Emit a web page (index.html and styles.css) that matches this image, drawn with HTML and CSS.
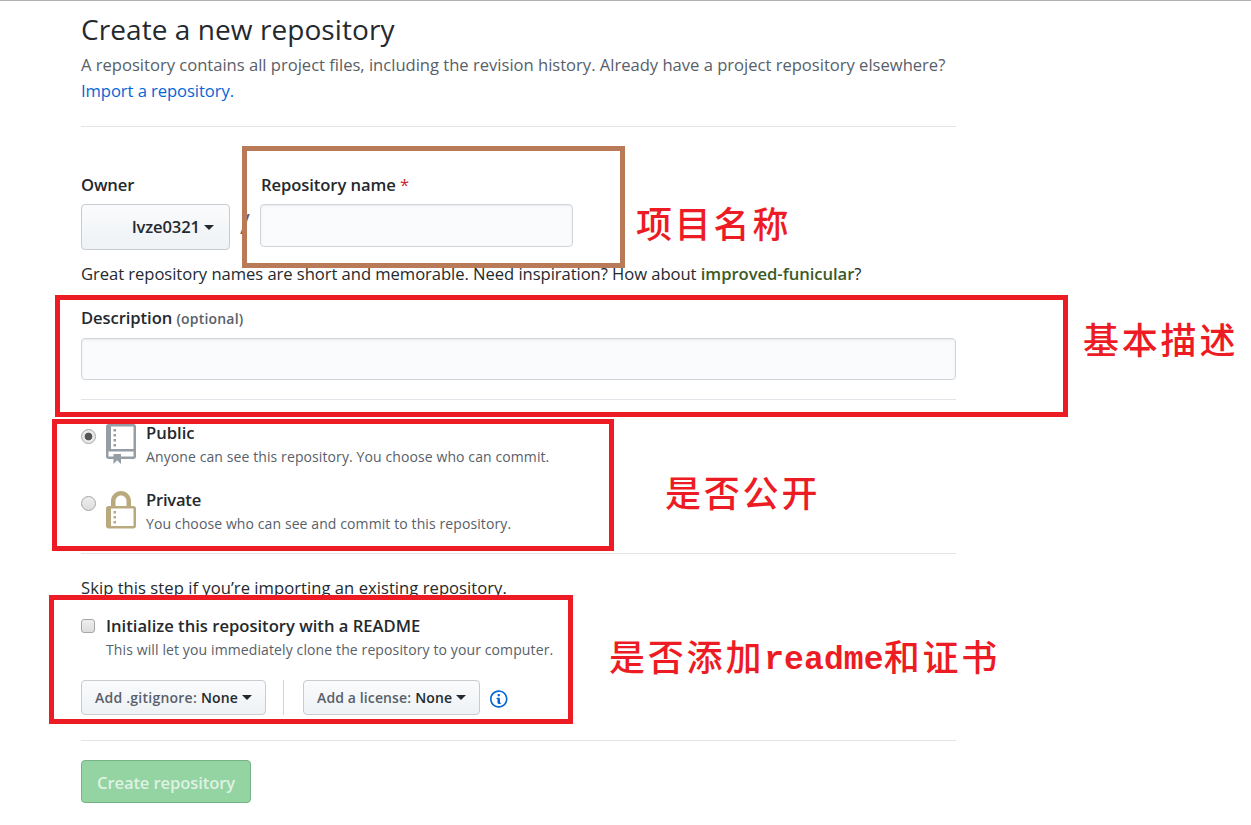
FILE: index.html
```html
<!DOCTYPE html>
<html lang="en">
<head>
<meta charset="utf-8">
<title>Create a new repository</title>
<link rel="stylesheet" href="styles.css">
</head>
<body>
<main class="page">
  <header class="intro">
    <h1 class="title">Create a new repository</h1>
    <p class="lead">A repository contains all project files, including the revision history. Already have a project repository elsewhere?<br><a class="link">Import a repository.</a></p>
  </header>
  <section class="naming">
    <div class="name-row">
      <div class="field owner">
        <label class="label">Owner</label>
        <button class="btn owner-btn"><span>lvze0321</span><i class="caret"></i></button>
      </div>
      <span class="slash">/</span>
      <div class="field">
        <label class="label name-label">Repository name <span class="required">*</span></label>
        <input class="input name-input" type="text">
      </div>
    </div>
    <p class="hint">Great repository names are short and memorable. Need inspiration? How about <strong class="suggestion">improved-funicular</strong>?</p>
    <div class="field description">
      <label class="label">Description <span class="optional">(optional)</span></label>
      <input class="input" type="text">
    </div>
  </section>
  <section class="visibility">
    <label class="choice">
      <span class="radio checked"></span>
      <svg class="icon public" viewBox="0 0 12 16"><path d="M4 9H3V8h1v1zm0-3H3v1h1V6zm0-2H3v1h1V4zm0-2H3v1h1V2zm8-1v12c0 .55-.45 1-1 1H6v2l-1.5-1.5L3 16v-2H1c-.55 0-1-.45-1-1V1c0-.55.45-1 1-1h10c.55 0 1 .45 1 1zm-1 10H1v2h2v-1h3v1h5v-2zm0-10H2v9h9V1z"/></svg>
      <span class="choice-text"><b class="choice-title">Public</b><span class="note">Anyone can see this repository. You choose who can commit.</span></span>
    </label>
    <label class="choice">
      <span class="radio"></span>
      <svg class="icon private" viewBox="0 0 12 16"><path d="M4 13H3v-1h1v1zm8-6v7c0 .55-.45 1-1 1H1c-.55 0-1-.45-1-1V7c0-.55.45-1 1-1h1V4c0-2.2 1.8-4 4-4s4 1.8 4 4v2h1c.55 0 1 .45 1 1zM3.8 6h4.41V4c0-1.22-.98-2.2-2.2-2.2-1.22 0-2.2.98-2.2 2.2v2H3.8zM11 7H2v7h9V7zM4 8H3v1h1V8zm0 2H3v1h1v-1z"/></svg>
      <span class="choice-text"><b class="choice-title tight">Private</b><span class="note">You choose who can see and commit to this repository.</span></span>
    </label>
  </section>
  <section class="setup">
    <p class="skip">Skip this step if you’re importing an existing repository.</p>
    <label class="choice readme">
      <span class="checkbox"></span>
      <span class="choice-text"><b class="choice-title">Initialize this repository with a README</b><span class="note">This will let you immediately clone the repository to your computer.</span></span>
    </label>
    <div class="templates">
      <button class="btn small gitignore"><span>Add .gitignore:</span><b>None</b><i class="caret"></i></button>
      <span class="divider"></span>
      <button class="btn small license"><span>Add a license:</span><b>None</b><i class="caret"></i></button>
      <svg class="info" viewBox="0 0 14 16"><path fill-rule="evenodd" d="M6.3 5.69a.942.942 0 0 1-.28-.7c0-.28.09-.52.28-.7.19-.18.42-.28.7-.28.28 0 .52.09.7.28.18.19.28.42.28.7 0 .28-.09.52-.28.7a1 1 0 0 1-.7.3c-.28 0-.52-.11-.7-.3zM8 7.99c-.02-.25-.11-.48-.31-.69-.2-.19-.42-.3-.69-.31H6c-.27.02-.48.13-.69.31-.2.2-.3.44-.31.69h1v3c.02.27.11.5.31.69.2.2.42.31.69.31h1c.27 0 .48-.11.69-.31.2-.19.3-.42.31-.69H8V7.98v.01zM7 2.3c-3.14 0-5.7 2.54-5.7 5.68 0 3.14 2.56 5.7 5.7 5.7s5.7-2.55 5.7-5.7c0-3.15-2.56-5.69-5.7-5.69v.01zM7 .98c3.86 0 7 3.14 7 7s-3.14 7-7 7-7-3.12-7-7 3.14-7 7-7z"/></svg>
    </div>
  </section>
  <button class="submit">Create repository</button>
</main>
<div class="frame frame-name"></div>
<div class="frame frame-description"></div>
<div class="frame frame-visibility"></div>
<div class="frame frame-readme"></div>
<span class="callout callout-name">项目名称</span>
<span class="callout callout-description">基本描述</span>
<span class="callout callout-visibility">是否公开</span>
<span class="callout callout-readme">是否添加<span class="latin">readme</span>和证书</span>
</body>
</html>
```
FILE: styles.css
```css
* { box-sizing: border-box; }
body {
  position: relative;
  width: 1251px;
  height: 825px;
  margin: 0;
  overflow: hidden;
  border-top: 1px solid #b0b0b0;
  background: #fff;
  color: #24292e;
  font: 16.6px/26px "Open Sans", "Noto Sans", sans-serif;
}
h1, p { margin: 0; font-weight: 400; }
b, strong { font-weight: 600; }
button, input { font: inherit; color: inherit; outline: 0; }
.page { width: 875px; margin-left: 81px; padding-top: 10px; }
.intro { height: 116px; border-bottom: 1px solid #e1e4e8; }
.title { height: 41px; font-size: 28px; letter-spacing: .07px; line-height: 37px; }
.lead { color: #586069; letter-spacing: -.015px; }
.link { color: #0366d6; letter-spacing: -.07px; }
.naming { height: 273px; padding-top: 45px; border-bottom: 1px solid #e1e4e8; }
.name-row { display: flex; height: 89px; }
.field { display: flex; flex-direction: column; }
.owner { width: 149px; }
.label { height: 32px; font-weight: 600; letter-spacing: -.08px; }
.owner .label, .owner-btn { letter-spacing: -.13px; }
.name-row .name-label { padding-left: 1px; }
.required { color: #cb2431; font-weight: 400; }
.optional { color: #586069; font-size: 14px; letter-spacing: .2px; }
.slash { width: 30px; padding: 39px 0 0 10px; color: #586069; font-size: 27px; }
.input {
  width: 100%;
  height: 42px;
  padding: 0 10px;
  border: 1px solid #d1d5da;
  border-radius: 4px;
  background: #fafbfc;
  box-shadow: inset 0 1px 2px rgba(27, 31, 35, .075);
}
.name-input { width: 313px; height: 43px; }
.btn {
  display: flex;
  align-items: center;
  border: 1px solid #c8cbcf;
  border-radius: 4px;
  background: linear-gradient(#fafbfc, #eff3f6 90%);
  font-weight: 600;
}
.owner-btn { height: 46px; padding: 0 0 0 50px; }
.caret {
  margin-left: 4px;
  border: 5px solid transparent;
  border-top-color: #24292e;
  border-bottom: 0;
}
.hint { height: 44px; letter-spacing: -.05px; }
.suggestion { color: #3c5a24; letter-spacing: -.03px; }
.description .label { height: 33px; }
.visibility { height: 154px; padding-top: 20px; border-bottom: 1px solid #e1e4e8; }
.choice { display: flex; height: 67px; }
.radio {
  width: 15px;
  height: 15px;
  margin: 9px 10px 0 0;
  border: 1px solid #a6a6a6;
  border-radius: 50%;
  background: linear-gradient(#eee, #ddd);
}
.checked { background: radial-gradient(circle, #555 0 3.5px, #e8e8e8 4.2px); }
.icon { width: 30px; height: 40px; margin: 4px 10px 0 0; }
.public { fill: #959da5; }
.private { fill: #b9a97f; }
.choice-text { display: flex; flex-direction: column; }
.choice-title { height: 24px; }
.tight { letter-spacing: -.23px; }
.note { color: #586069; font-size: 14px; letter-spacing: .1px; }
.setup { height: 187px; padding-top: 21px; border-bottom: 1px solid #e1e4e8; }
.skip { height: 38px; letter-spacing: .04px; }
.readme { height: 67px; }
.readme .note { letter-spacing: .115px; }
.checkbox {
  width: 14px;
  height: 14px;
  margin: 6px 11px 0 0;
  border: 1px solid #a6a6a6;
  border-radius: 3px;
  background: linear-gradient(#eee, #ddd);
}
.templates { display: flex; align-items: center; height: 35px; }
.small { height: 35px; padding: 0 0 0 13px; font-size: 14px; letter-spacing: .12px; white-space: nowrap; }
.small span { color: #586069; }
.small b { margin-left: 4px; }
.gitignore { width: 185px; }
.gitignore span { letter-spacing: .24px; }
.license { width: 177px; }
.divider { width: 1px; height: 35px; margin: 0 19px 0 17px; background: #d1d5da; }
.info { width: 17.5px; height: 20px; margin: 2px 0 0 10px; fill: #0366d6; }
.submit {
  width: 170px;
  height: 43px;
  margin-top: 19px;
  padding: 2px 0 0;
  border: 1px solid #76b286;
  border-radius: 4px;
  background: #94d3a2;
  color: #dff2e3;
  font-weight: 600;
  letter-spacing: -.11px;
}
.frame { position: absolute; border: 5px solid #ed1c24; }
.frame-name { left: 242px; top: 145px; width: 383px; height: 122px; border-color: #b97a57; }
.frame-description { left: 55px; top: 294px; width: 1013px; height: 122px; }
.frame-visibility { left: 52px; top: 418px; width: 562px; height: 132px; }
.frame-readme { left: 49px; top: 594px; width: 524px; height: 129px; }
.callout {
  position: absolute;
  color: #ed1c24;
  font: 500 36px/50px "Noto Sans CJK SC", sans-serif;
  letter-spacing: 2.8px;
  white-space: nowrap;
}
.callout-name { left: 636px; top: 196px; }
.callout-description { left: 1083px; top: 312px; }
.callout-visibility { left: 665px; top: 465px; }
.callout-readme { left: 609px; top: 629px; }
.latin {
  display: inline-block;
  font: 700 33px/46px "Liberation Mono", monospace;
  letter-spacing: .1px;
  vertical-align: 2px;
}
```
